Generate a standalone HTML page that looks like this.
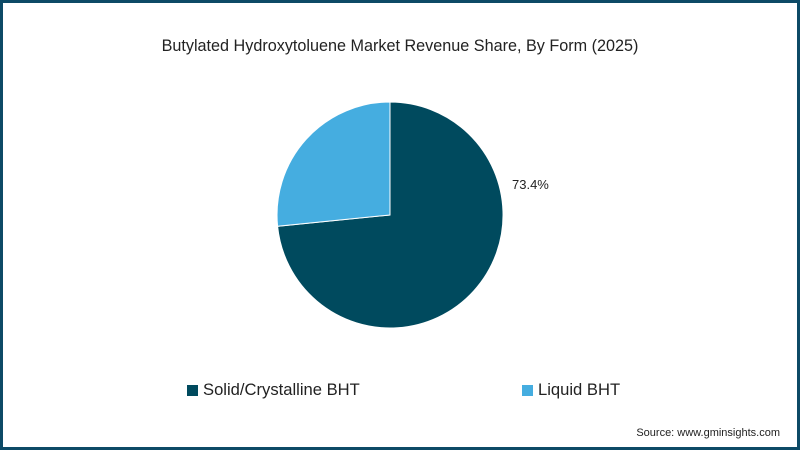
<!DOCTYPE html>
<html><head><style>
html,body{margin:0;padding:0;}
body{width:800px;height:450px;position:relative;background:#fff;font-family:"Liberation Sans",sans-serif;overflow:hidden;}
.frame{position:absolute;left:0;top:0;width:794px;height:444px;border:3px solid #0d4a66;}
.t{position:absolute;top:37px;left:0;width:800px;text-align:center;font-size:16.2px;color:#222;}
.lbl{position:absolute;left:512px;top:177px;font-size:13px;color:#222;}
.lg{position:absolute;top:380px;font-size:16.6px;color:#222;}
.sq{display:inline-block;width:11px;height:11px;margin-right:5px;vertical-align:-1px;}
.src{position:absolute;right:20px;top:427px;font-size:11px;color:#222;}
</style></head><body>
<div class="frame"></div>
<div class="t">Butylated Hydroxytoluene Market Revenue Share, By Form (2025)</div>
<svg style="position:absolute;left:0;top:0" width="800" height="450">
<path d="M390 215 L390 102 A113 113 0 1 1 277.6 226.3 Z" fill="#004a5e" stroke="#fff" stroke-width="1"/>
<path d="M390 215 L277.6 226.3 A113 113 0 0 1 390 102 Z" fill="#45ade0" stroke="#fff" stroke-width="1"/>
</svg>
<div class="lbl">73.4%</div>
<div class="lg" style="left:187px"><span class="sq" style="background:#004a5e"></span>Solid/Crystalline BHT</div>
<div class="lg" style="left:522px"><span class="sq" style="background:#45ade0"></span>Liquid BHT</div>
<div class="src">Source: www.gminsights.com</div>
</body></html>
